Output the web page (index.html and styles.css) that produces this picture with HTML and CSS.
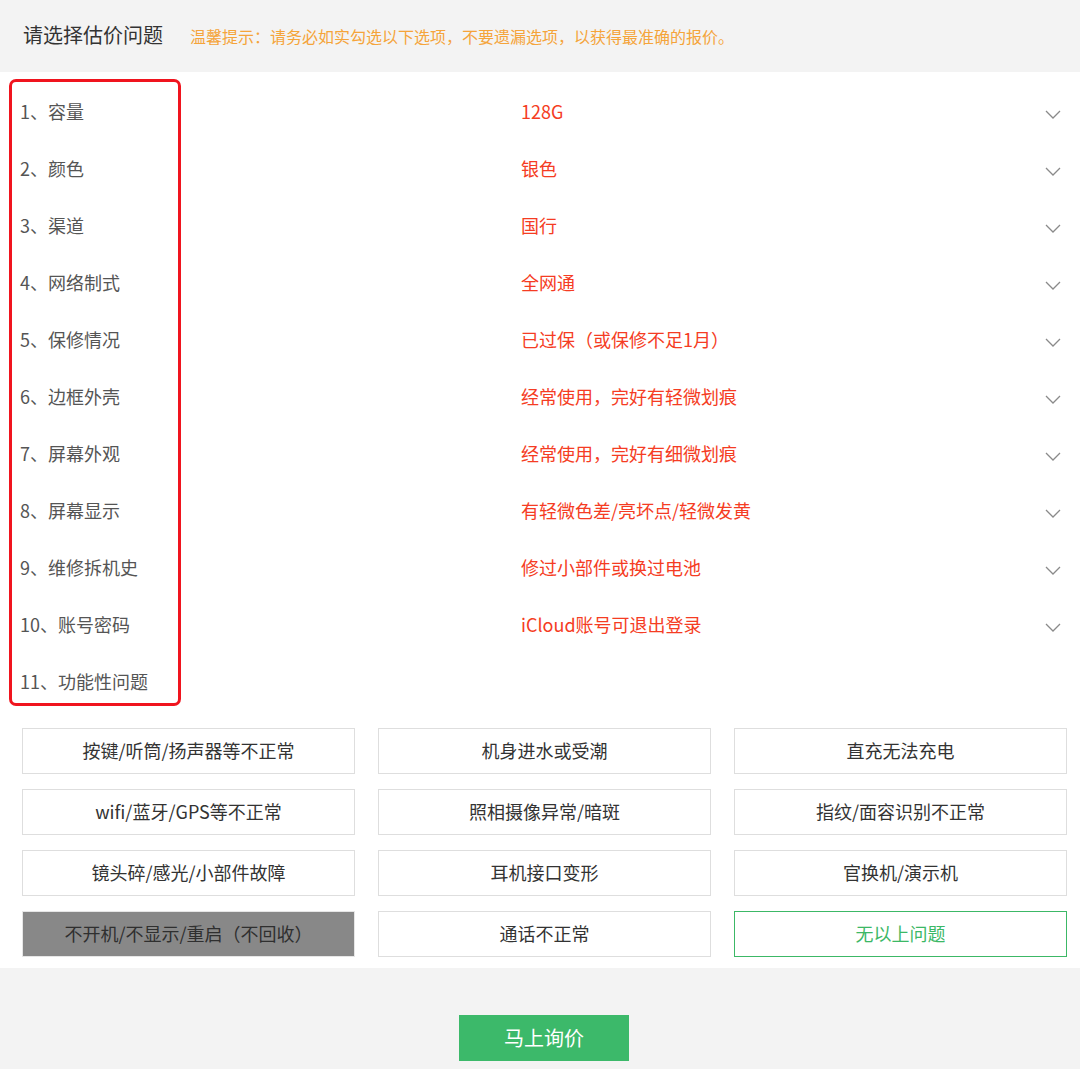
FILE: index.html
```html
<!DOCTYPE html>
<html lang="zh-CN">
<head>
<meta charset="utf-8">
<link rel="stylesheet" href="styles.css">
</head>
<body>
<div class="page">
  <header class="head">
    <h1 class="title">请选择估价问题</h1>
    <span class="tip">温馨提示：请务必如实勾选以下选项，不要遗漏选项，以获得最准确的报价。</span>
  </header>
  <main class="panel">
    <div class="mark"></div>
    <ul class="rows">
      <li class="row"><span class="label">1、容量</span><span class="value">128G</span><svg class="chev" viewBox="0 0 16 9"><path d="M1 1l7 7 7-7"/></svg></li>
      <li class="row"><span class="label">2、颜色</span><span class="value">银色</span><svg class="chev" viewBox="0 0 16 9"><path d="M1 1l7 7 7-7"/></svg></li>
      <li class="row"><span class="label">3、渠道</span><span class="value">国行</span><svg class="chev" viewBox="0 0 16 9"><path d="M1 1l7 7 7-7"/></svg></li>
      <li class="row"><span class="label">4、网络制式</span><span class="value">全网通</span><svg class="chev" viewBox="0 0 16 9"><path d="M1 1l7 7 7-7"/></svg></li>
      <li class="row"><span class="label">5、保修情况</span><span class="value">已过保（或保修不足1月）</span><svg class="chev" viewBox="0 0 16 9"><path d="M1 1l7 7 7-7"/></svg></li>
      <li class="row"><span class="label">6、边框外壳</span><span class="value">经常使用，完好有轻微划痕</span><svg class="chev" viewBox="0 0 16 9"><path d="M1 1l7 7 7-7"/></svg></li>
      <li class="row"><span class="label">7、屏幕外观</span><span class="value">经常使用，完好有细微划痕</span><svg class="chev" viewBox="0 0 16 9"><path d="M1 1l7 7 7-7"/></svg></li>
      <li class="row"><span class="label">8、屏幕显示</span><span class="value">有轻微色差/亮坏点/轻微发黄</span><svg class="chev" viewBox="0 0 16 9"><path d="M1 1l7 7 7-7"/></svg></li>
      <li class="row"><span class="label">9、维修拆机史</span><span class="value">修过小部件或换过电池</span><svg class="chev" viewBox="0 0 16 9"><path d="M1 1l7 7 7-7"/></svg></li>
      <li class="row"><span class="label">10、账号密码</span><span class="value">iCloud账号可退出登录</span><svg class="chev" viewBox="0 0 16 9"><path d="M1 1l7 7 7-7"/></svg></li>
      <li class="row"><span class="label">11、功能性问题</span></li>
    </ul>
    <div class="opts">
      <div class="opt">按键/听筒/扬声器等不正常</div>
      <div class="opt">机身进水或受潮</div>
      <div class="opt">直充无法充电</div>
      <div class="opt">wifi/蓝牙/GPS等不正常</div>
      <div class="opt">照相摄像异常/暗斑</div>
      <div class="opt">指纹/面容识别不正常</div>
      <div class="opt">镜头碎/感光/小部件故障</div>
      <div class="opt">耳机接口变形</div>
      <div class="opt">官换机/演示机</div>
      <div class="opt opt-dis">不开机/不显示/重启（不回收）</div>
      <div class="opt">通话不正常</div>
      <div class="opt opt-on">无以上问题</div>
    </div>
  </main>
  <footer class="foot">
    <button class="ask">马上询价</button>
  </footer>
</div>
</body>
</html>
```

FILE: styles.css
```css
* { box-sizing: border-box; }
html, body { margin: 0; padding: 0; }
body {
  font-family: "Noto Sans CJK SC", "Noto Sans", "Liberation Sans", sans-serif;
  background: #f3f3f3;
  width: 1080px;
  height: 1069px;
  overflow: hidden;
}
.head {
  height: 72px;
  display: flex;
  align-items: center;
  padding-left: 23px;
  padding-bottom: 3px;
  background: #f3f3f3;
}
.title {
  margin: 0;
  font-size: 20px;
  font-weight: 400;
  color: #333;
  line-height: 1;
}
.tip {
  margin-left: 27px;
  font-size: 16px;
  color: #f5a43a;
  line-height: 1;
  padding-top: 2px;
}
.panel {
  position: relative;
  background: #fff;
  padding: 10px 0 11px;
}
.mark {
  position: absolute;
  left: 9px;
  top: 7px;
  width: 172px;
  height: 627px;
  border: 3px solid #f0141e;
  border-radius: 7px;
  pointer-events: none;
}
.rows {
  list-style: none;
  margin: 0;
  padding: 0;
}
.row {
  height: 57px;
  display: flex;
  align-items: center;
  font-size: 18px;
  line-height: 1;
}
.label {
  width: 521px;
  padding-left: 20px;
  color: #555;
}
.value {
  flex: 1;
  color: #f53c23;
}
.chev {
  width: 16px;
  height: 9px;
  margin: 8px 19px 0 0;
  fill: none;
  stroke: #8a8a8a;
  stroke-width: 1.3;
}
.opts {
  display: grid;
  grid-template-columns: repeat(3, 333px);
  column-gap: 23px;
  row-gap: 15px;
  margin: 19px 0 0 22px;
}
.opt {
  height: 46px;
  padding-bottom: 3px;
  border: 1px solid #dedede;
  display: flex;
  align-items: center;
  justify-content: center;
  font-size: 18px;
  color: #333;
  background: #fff;
}
.opt-dis {
  background: #888;
  border-color: #e6e6e6;
  color: #2f2f2f;
}
.opt-on {
  border-color: #3cb866;
  color: #3cb866;
}
.foot {
  display: flex;
  justify-content: center;
  padding-top: 47px;
}
.ask {
  width: 170px;
  height: 46px;
  margin-left: 8px;
  padding-bottom: 3px;
  border: none;
  background: #3cb96a;
  color: #fff;
  font-family: inherit;
  font-size: 20px;
  cursor: pointer;
}
```
